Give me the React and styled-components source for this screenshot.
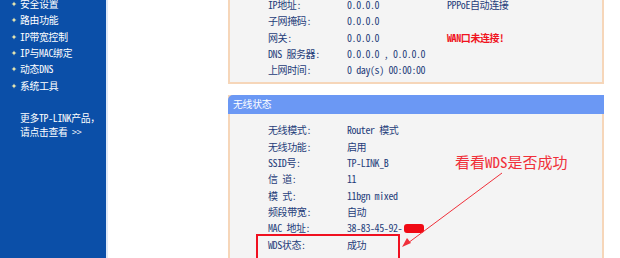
import React from "react";
import styled, { createGlobalStyle } from "styled-components";

const GlobalStyle = createGlobalStyle`
  html, body {
    margin: 0;
    padding: 0;
    background: #ffffff;
    overflow: hidden;
  }
  body {
    font-family: "Noto Sans Mono CJK SC", "Noto Sans CJK SC", monospace;
    font-size: 10px;
  }
`;

const Page = styled.div`
  display: flex;
  width: 620px;
  height: 258px;
  overflow: hidden;
`;

const Sidebar = styled.div`
  width: 106px;
  flex-shrink: 0;
  background: #0b4fa8;
  border-right: 2px solid #dfe9f7;
  color: #ffffff;
  display: flex;
  flex-direction: column;
`;

const Menu = styled.ul`
  list-style: none;
  margin: -4px 0 0;
  padding: 0 0 0 11px;
`;

const MenuItem = styled.li`
  display: flex;
  align-items: center;
  gap: 3px;
  height: 16.3px;
  line-height: 16px;
  white-space: nowrap;
  font-size: 9.8px;
  letter-spacing: -0.2px;
`;

const Bullet = styled.svg`
  width: 6px;
  height: 6px;
  flex-shrink: 0;
`;

const MoreLink = styled.div`
  margin: 17px 0 0 20px;
  line-height: 14px;
  font-size: 9.8px;
  letter-spacing: -0.3px;
  white-space: nowrap;
`;

const Main = styled.div`
  flex: 1;
  padding-left: 120px;
  display: flex;
  flex-direction: column;
`;

// top panel is cut off by the window, hence the negative offset
const Panel = styled.div`
  position: relative;
  width: 372px;
  background: #f4f4f4;
  border: 2px solid #f6d6b9;
  margin-top: ${(p) => p.$top || 0}px;
  padding: ${(p) => (p.$header ? "0 0 8px" : "8px 0 4px")};
`;

const Header = styled.div`
  height: 19px;
  margin: -2px -2px 8px;
  padding-left: 5px;
  background: #6b98f4;
  border-radius: 5px 0 0 0;
  color: #ffffff;
  line-height: 19px;
  font-size: 9.8px;
  letter-spacing: -0.2px;
`;

const Row = styled.div`
  display: grid;
  grid-template-columns: 79px 100px 1fr;
  height: 16.3px;
  line-height: 16px;
  padding-left: 38px;
  white-space: nowrap;
  font-size: 10px;
  letter-spacing: -0.4px;
`;

const Cell = styled.span`
  color: ${(p) => (p.$alert ? "#f0141e" : "#1f3d7a")};
  font-weight: ${(p) => (p.$alert ? 700 : 400)};
`;

const MarkBox = styled.div`
  position: absolute;
  left: 26px;
  top: 137px;
  width: 140px;
  height: 24px;
  border: 2px solid #f01020;
`;

const Blot = styled.div`
  position: absolute;
  left: 174px;
  top: 127px;
  width: 20px;
  height: 9px;
  border-radius: 3px;
  background: #f00a14;
`;

const Note = styled.div`
  position: absolute;
  left: 225px;
  top: 56px;
  color: #f0303a;
  font-size: 15px;
  line-height: 18px;
  white-space: nowrap;
`;

const Arrow = styled.svg`
  position: absolute;
  left: 0;
  top: 0;
  width: 372px;
  height: 170px;
  pointer-events: none;
`;

const menu = ["安全设置", "路由功能", "IP带宽控制", "IP与MAC绑定", "动态DNS", "系统工具"];

const wanRows = [
  ["IP地址:", "0.0.0.0", "PPPoE自动连接"],
  ["子网掩码:", "0.0.0.0", ""],
  ["网关:", "0.0.0.0", "WAN口未连接!"],
  ["DNS 服务器:", "0.0.0.0 , 0.0.0.0", ""],
  ["上网时间:", "0 day(s) 00:00:00", ""],
];

const wlanRows = [
  ["无线模式:", "Router 模式"],
  ["无线功能:", "启用"],
  ["SSID号:", "TP-LINK_B"],
  ["信 道:", "11"],
  ["模 式:", "11bgn mixed"],
  ["频段带宽:", "自动"],
  ["MAC 地址:", "38-83-45-92-"],
  ["WDS状态:", "成功"],
];

const App = () => {
  return (
    <>
      <GlobalStyle />
      <Page>
        <Sidebar>
          <Menu>
            {menu.map((m) => (
              <MenuItem key={m}>
                <Bullet viewBox="0 0 6 6">
                  <path d="M3 0.5 L3.8 2.2 L5.5 3 L3.8 3.8 L3 5.5 L2.2 3.8 L0.5 3 L2.2 2.2 Z" fill="#f3eeb0" />
                </Bullet>
                {m}
              </MenuItem>
            ))}
          </Menu>
          <MoreLink>
            更多TP-LINK产品，
            <br />
            请点击查看 &gt;&gt;
          </MoreLink>
        </Sidebar>
        <Main>
          <Panel $top={-13}>
            {wanRows.map(([a, b, c]) => (
              <Row key={a}>
                <Cell>{a}</Cell>
                <Cell>{b}</Cell>
                <Cell $alert={c.startsWith("WAN")}>{c}</Cell>
              </Row>
            ))}
          </Panel>
          <Panel $top={11} $header>
            <Header>无线状态</Header>
            {wlanRows.map(([a, b]) => (
              <Row key={a}>
                <Cell>{a}</Cell>
                <Cell>{b}</Cell>
              </Row>
            ))}
            <Blot />
            <MarkBox />
            <Note>看看WDS是否成功</Note>
            <Arrow viewBox="0 0 372 170">
              <line x1="272" y1="76" x2="178" y2="146" stroke="#f0303a" strokeWidth="1" />
              <path d="M172 150 L177 141 L181 146 Z" fill="#f0303a" />
            </Arrow>
          </Panel>
        </Main>
      </Page>
    </>
  );
};

export default App;
